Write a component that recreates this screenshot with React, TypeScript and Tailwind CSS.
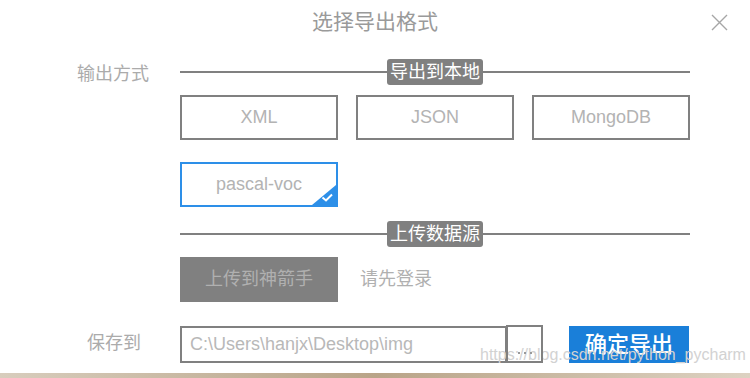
import React from 'react';

const cjk = { fontFamily: '"Liberation Sans", "Noto Sans CJK SC", sans-serif' };

function Divider({ label }: { label: string }) {
  return (
    <div className="flex items-center h-[26px]">
      <div className="flex-1 h-[2px] bg-[#808080]" />
      <span className="h-[26px] px-[3px] rounded-[3px] bg-[#808080] text-white text-[18px] leading-[26px]">
        {label}
      </span>
      <div className="flex-1 h-[2px] bg-[#808080]" />
    </div>
  );
}

function FormatBox({ label, selected }: { label: string; selected?: boolean }) {
  return (
    <div
      className={`relative h-[45px] flex items-center justify-center text-[18px] text-[#b3b3b3] border-2 ${
        selected ? 'border-[#2d8fe8]' : 'border-[#808080]'
      }`}
    >
      {label}
      {selected && (
        <svg className="absolute right-0 bottom-0" width="24" height="20" viewBox="0 0 24 20">
          <polygon points="24,0 24,20 0,20" fill="#2d8fe8" />
          <path d="M10.5 12.5 L14 15.5 L20 9.5" stroke="white" strokeWidth="2" fill="none" />
        </svg>
      )}
    </div>
  );
}

export default function App() {
  return (
    <div className="w-[750px] h-[378px] bg-white flex flex-col overflow-hidden" style={cjk}>
      <div className="relative h-[44px] flex items-center justify-center">
        <span className="text-[21px] text-[#9a9a9a]">选择导出格式</span>
        <svg className="absolute left-[711px] top-[14px]" width="17" height="17" viewBox="0 0 17 17">
          <path d="M1 1 L16 16 M16 1 L1 16" stroke="#a6a6a6" strokeWidth="1.4" />
        </svg>
      </div>

      <div className="flex mt-[15px]">
        <div className="w-[180px] pl-[77px] text-[18px] text-[#ababab] leading-[26px] pt-[2px]">输出方式</div>
        <div className="w-[510px] flex flex-col">
          <Divider label="导出到本地" />
          <div className="grid grid-cols-3 gap-[18px] mt-[10px]">
            <FormatBox label="XML" />
            <FormatBox label="JSON" />
            <FormatBox label="MongoDB" />
          </div>
          <div className="grid grid-cols-3 gap-[18px] mt-[22px]">
            <FormatBox label="pascal-voc" selected />
          </div>
          <div className="mt-[14px]">
            <Divider label="上传数据源" />
          </div>
          <div className="flex items-center mt-[10px]">
            <div className="w-[158px] h-[45px] bg-[#808080] flex items-center justify-center text-[18px] text-[#b0b0b0]">
              上传到神箭手
            </div>
            <span className="ml-[22px] text-[18px] text-[#b0b0b0]">请先登录</span>
          </div>
        </div>
      </div>

      <div className="relative flex items-start mt-[23px]">
        <div className="w-[180px] pl-[87px] pt-[5px] text-[18px] text-[#ababab] leading-[26px]">保存到</div>
        <div className="w-[327px] h-[37px] mt-[1px] border-2 border-[#808080] flex items-center pl-[8px] text-[18px] text-[#b8b8b8]">
          C:\Users\hanjx\Desktop\img
        </div>
        <div className="relative z-10 w-[37px] h-[38px] -ml-[1px] border-2 border-[#808080] flex items-end justify-center gap-[4px] pb-[7px]">
          <span className="w-[2px] h-[2px] bg-[#999]" />
          <span className="w-[2px] h-[2px] bg-[#999]" />
          <span className="w-[2px] h-[2px] bg-[#999]" />
        </div>
        <div className="ml-[26px] w-[120px] h-[37px] mt-[1px] bg-[#1a7fd9] flex items-center justify-center text-[22px] font-medium text-white">
          确定导出
        </div>
        <span
          className="absolute left-[480px] top-[20px] text-[16px] leading-[20px] text-[#d2d2d2]"
          style={{ fontFamily: '"Liberation Sans", sans-serif' }}
        >
          https://blog.csdn.net/python_pycharm
        </span>
      </div>

      <div className="mt-auto h-[5px] bg-gradient-to-r from-[#d8cdbd] via-[#b9a488] to-[#ddd2c2]" />
    </div>
  );
}
